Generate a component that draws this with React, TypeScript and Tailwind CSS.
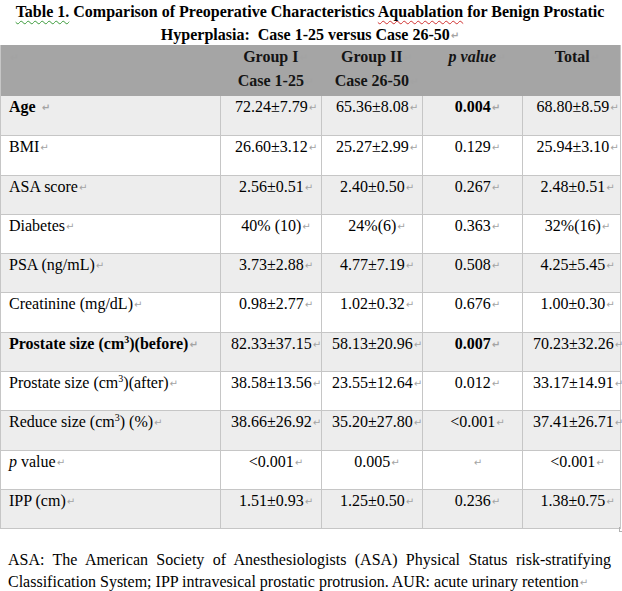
import React from "react";

type Row = {
  label: React.ReactNode;
  bold?: boolean;
  cells: string[];
  boldP?: boolean;
  gray: boolean;
};

function Mark({ space }: { space?: boolean }) {
  return (
    <span
      className={`text-[10px] text-[#a3a3a3] align-[1px] ${space ? "ml-[6px]" : "ml-[1px]"}`}
      style={{ fontFamily: '"DejaVu Sans", sans-serif' }}
    >
      ↵
    </span>
  );
}

function Cm3() {
  return (
    <>
      (cm<sup className="text-[10px] -top-[0.6em]">3</sup>)
    </>
  );
}

const rows: Row[] = [
  { label: "Age", bold: true, cells: ["72.24±7.79", "65.36±8.08", "0.004", "68.80±8.59"], boldP: true, gray: true },
  { label: "BMI", cells: ["26.60±3.12", "25.27±2.99", "0.129", "25.94±3.10"], gray: false },
  { label: "ASA score", cells: ["2.56±0.51", "2.40±0.50", "0.267", "2.48±0.51"], gray: true },
  { label: "Diabetes", cells: ["40% (10)", "24%(6)", "0.363", "32%(16)"], gray: false },
  { label: "PSA (ng/mL)", cells: ["3.73±2.88", "4.77±7.19", "0.508", "4.25±5.45"], gray: true },
  { label: "Creatinine (mg/dL)", cells: ["0.98±2.77", "1.02±0.32", "0.676", "1.00±0.30"], gray: false },
  {
    label: (
      <>
        Prostate size <Cm3 />
        (before)
      </>
    ),
    bold: true,
    cells: ["82.33±37.15", "58.13±20.96", "0.007", "70.23±32.26"],
    boldP: true,
    gray: true,
  },
  {
    label: (
      <>
        Prostate size <Cm3 />
        (after)
      </>
    ),
    cells: ["38.58±13.56", "23.55±12.64", "0.012", "33.17±14.91"],
    gray: false,
  },
  {
    label: (
      <>
        Reduce size <Cm3 /> (%)
      </>
    ),
    cells: ["38.66±26.92", "35.20±27.80", "<0.001", "37.41±26.71"],
    gray: true,
  },
  {
    label: (
      <>
        <i>p</i> value
      </>
    ),
    cells: ["<0.001", "0.005", "", "<0.001"],
    gray: false,
  },
  { label: "IPP (cm)", cells: ["1.51±0.93", "1.25±0.50", "0.236", "1.38±0.75"], gray: true },
];

const cols = "grid grid-cols-[219px_101px_101px_100px_100px]";

export default function App() {
  return (
    <div
      className="w-[622px] h-[591px] bg-white text-black text-[16px] relative overflow-hidden"
      style={{ fontFamily: '"Liberation Serif", "Times New Roman", serif' }}
    >
      {/* Title */}
      <div className="text-center font-bold leading-[23px] w-[620px]">
        <div className="whitespace-nowrap">
          <span className="underline decoration-wavy decoration-[#3a9a3a] decoration-1 underline-offset-[3px]">
            Table 1.
          </span>{" "}
          Comparison of Preoperative Characteristics{" "}
          <span className="underline decoration-wavy decoration-[#d03030] decoration-1 underline-offset-[3px]">
            Aquablation
          </span>{" "}
          for Benign Prostatic
        </div>
        <div className="whitespace-nowrap">
          Hyperplasia:&nbsp; Case 1-25 versus Case 26-50
          <Mark />
        </div>
      </div>

      {/* Table */}
      <div className="mt-[-2px] w-[621px] border-l border-r border-b border-[#c6c6c6]">
        <div className={`${cols} h-[51px] bg-[#a5a5a5] font-bold leading-[23px] text-[#141414]`}>
          <div className="pl-[8px]">
            <Mark />
          </div>
          <div className="text-center pl-[10px]">
            Group I<Mark />
            <br />
            Case 1-25<Mark />
          </div>
          <div className="text-center pl-[10px]">
            Group II<Mark />
            <br />
            Case 26-50<Mark />
          </div>
          <div className="text-center pl-[10px] italic">
            p value<Mark />
          </div>
          <div className="text-center pl-[10px]">
            Total<Mark />
          </div>
        </div>

        {rows.map((r, i) => (
          <div
            key={i}
            className={`${cols} h-[39.3px] leading-[18px] ${r.gray ? "bg-[#ededed]" : "bg-white"} ${
              i > 0 ? "border-t border-[#c6c6c6]" : ""
            }`}
          >
            <div className={`pl-[8px] pt-[2px] whitespace-nowrap ${r.bold ? "font-bold" : ""}`}>
              {r.label}
              <Mark space={i === 0} />
            </div>
            {r.cells.map((c, j) => (
              <div
                key={j}
                className={`border-l border-[#c6c6c6] text-center pl-[10px] pt-[2px] whitespace-nowrap ${
                  j === 2 && r.boldP ? "font-bold" : ""
                }`}
              >
                {c}
                <Mark />
              </div>
            ))}
          </div>
        ))}
      </div>
      <div className="absolute left-[619px] top-[527px] w-[3px] h-[5px] border-l border-b border-[#b0b0b0]" />

      {/* Footnote */}
      <p className="mt-[20px] pl-[8px] w-[611px] leading-[22px] text-justify">
        ASA: The American Society of Anesthesiologists (ASA) Physical Status risk-stratifying
        Classification System; IPP intravesical prostatic protrusion. AUR: acute urinary retention
        <Mark />
      </p>
    </div>
  );
}
